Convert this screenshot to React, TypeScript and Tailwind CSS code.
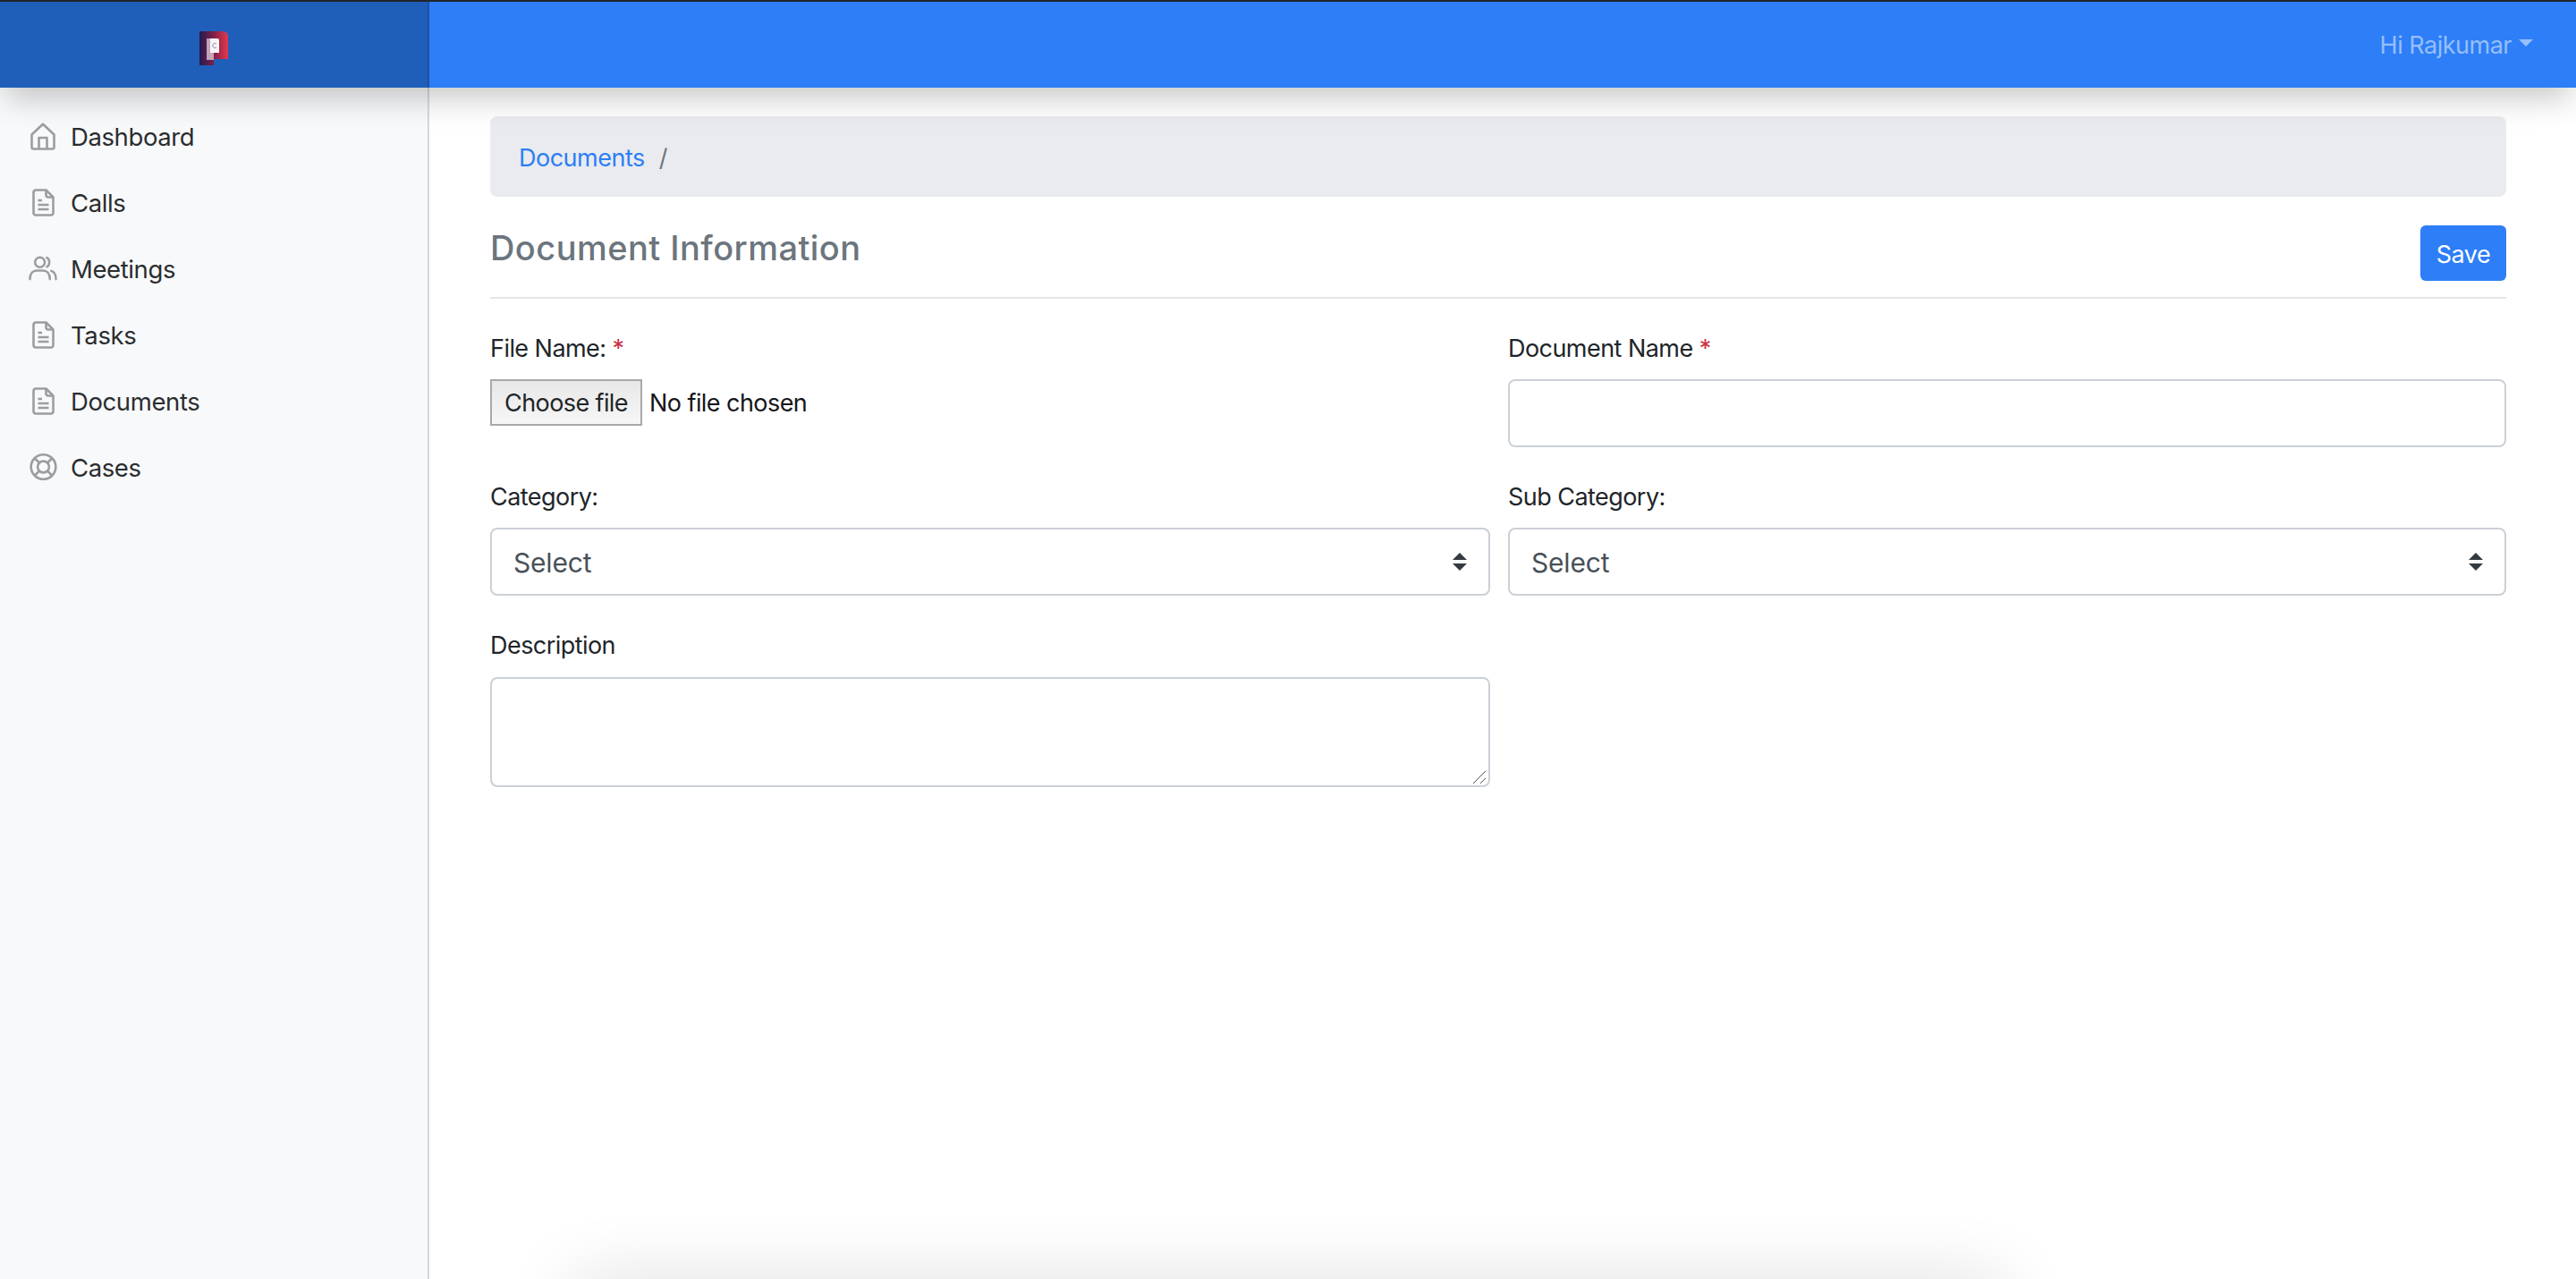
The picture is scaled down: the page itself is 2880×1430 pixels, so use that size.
import React from "react";

function DocIcon() {
  return (
    <svg width="25" height="31" viewBox="0 0 25 31" fill="none" stroke="#9c9d9e" strokeWidth="2.6" strokeLinejoin="round">
      <path d="M1.5 4 a2.5 2.5 0 0 1 2.5-2.5 H15.5 L23.5 9.5 V27 a2.5 2.5 0 0 1-2.5 2.5 H4 a2.5 2.5 0 0 1-2.5-2.5 Z" />
      <path d="M15.5 1.5 V7 a2.5 2.5 0 0 0 2.5 2.5 H23.5" />
      <path d="M6.5 13 H11 M6.5 18 H18.5 M6.5 23 H18.5" />
    </svg>
  );
}

function HomeIcon() {
  return (
    <svg width="28" height="31" viewBox="0 0 28 31" fill="none" stroke="#9c9d9e" strokeWidth="2.6" strokeLinejoin="round">
      <path d="M1.5 13.5 L14 1.8 L26.5 13.5 V27.5 a2 2 0 0 1-2 2 H3.5 a2 2 0 0 1-2-2 Z" />
      <path d="M9.5 29.5 V17 H18.5 V29.5" />
    </svg>
  );
}

function UsersIcon() {
  return (
    <svg width="33" height="28" viewBox="0 0 33 28" fill="none" stroke="#9c9d9e" strokeWidth="2.6" strokeLinecap="round">
      <circle cx="13" cy="7" r="5.6" />
      <path d="M21 1.8 C24.8 3.4 24.8 10.6 21 12.2" />
      <path d="M1.5 26.5 C1.5 20 5 16.5 9.5 16.5 H16.5 C21 16.5 24.5 20 24.5 26.5" />
      <path d="M26 17 C29.5 18 31.5 21 31.5 26.5" />
    </svg>
  );
}

function BuoyIcon() {
  return (
    <svg width="31" height="32" viewBox="0 0 31 32" fill="none" stroke="#9c9d9e" strokeWidth="2.6">
      <circle cx="15.5" cy="16" r="13.8" />
      <circle cx="15.5" cy="16" r="6.4" />
      <path d="M6 6.5 L11 11.5 M25 6.5 L20 11.5 M6 25.5 L11 20.5 M25 25.5 L20 20.5" />
    </svg>
  );
}

function Logo() {
  return (
    <svg width="32" height="38" viewBox="0 0 32 38">
      <defs>
        <linearGradient id="pg" x1="0" y1="0" x2="1" y2="0">
          <stop offset="0" stopColor="#221a4f" />
          <stop offset="0.5" stopColor="#7f2049" />
          <stop offset="1" stopColor="#e6394c" />
        </linearGradient>
      </defs>
      <path d="M1 0 H26 Q32 0 32 6 V31 H16 V38 H1 Q0 38 0 37 V1 Q0 0 1 0 Z" fill="url(#pg)" />
      <path d="M8 8 H12 V24 H16 V32 H8 Z" fill="#ffffff" fillOpacity="0.6" />
      <path d="M12 8 H20 Q22 8 22 10 V24 H12 Z" fill="#ffffff" fillOpacity="0.95" />
      <path d="M19 14 A2.6 2.6 0 1 0 19 18" fill="none" stroke="#8d8fb8" strokeWidth="1" />
    </svg>
  );
}

function SelectArrows() {
  return (
    <svg width="16" height="20" viewBox="0 0 16 20" className="pointer-events-none absolute right-[26px] top-[28px]" fill="#343a40">
      <path d="M8 0 L16 8 H0 Z" />
      <path d="M0 12 H16 L8 20 Z" />
    </svg>
  );
}

const nav: { label: string; icon: React.ReactNode }[] = [
  { label: "Dashboard", icon: <HomeIcon /> },
  { label: "Calls", icon: <DocIcon /> },
  { label: "Meetings", icon: <UsersIcon /> },
  { label: "Tasks", icon: <DocIcon /> },
  { label: "Documents", icon: <DocIcon /> },
  { label: "Cases", icon: <BuoyIcon /> },
];

function Field({ label, star, children }: { label: string; star?: boolean; children: React.ReactNode }) {
  return (
    <div className="flex flex-col">
      <label className="mb-[15px] h-[42px] pt-[2px] text-[27px] leading-[42px] tracking-[-0.55px] text-[#212529]">
        {label}
        {star && <span className="text-[#c9303f]"> *</span>}
      </label>
      {children}
    </div>
  );
}

function SelectBox() {
  return (
    <div className="relative">
      <select className="h-[76px] w-full appearance-none rounded-[8px] border-2 border-[#cbd0d7] bg-white px-[24px] pt-[2px] text-[30px] tracking-[-0.2px] text-[#495057]">
        <option>Select</option>
      </select>
      <SelectArrows />
    </div>
  );
}

export default function App() {
  return (
    <div className="relative flex h-[1430px] w-[2880px] flex-col overflow-hidden bg-white font-['Inter',sans-serif] text-[#212529]">
      <header className="relative z-10 flex h-[98px] shrink-0 border-t-2 border-[#212529] bg-[#2d7ef7] shadow-[0_16px_36px_-6px_rgba(0,0,0,0.24)]">
        <div className="flex w-[480px] shrink-0 items-center justify-center border-r-2 border-[#1c529f] bg-[#205fb9] pt-[8px]">
          <Logo />
        </div>
        <div className="flex flex-1 items-center justify-end pr-[48px]">
          <span className="pt-[2px] text-[27px] leading-[42px] tracking-[-0.5px] text-[#96bffb]">Hi Rajkumar</span>
          <span className="ml-[8px] mb-[4px] h-0 w-0 border-x-[8px] border-t-[8px] border-x-transparent border-t-[#96bffb]" />
        </div>
      </header>

      <div className="flex min-h-0 flex-1">
        <aside className="w-[480px] shrink-0 border-r-2 border-[#d7d8da] bg-[#f8f9fb] pt-[17px]">
          {nav.map((n) => (
            <div key={n.label} className="flex h-[74px] items-center">
              <span className="ml-[32px] flex w-[32px] shrink-0 justify-center">{n.icon}</span>
              <span className="ml-[15px] pt-[1px] text-[27.5px] leading-[42px] tracking-[-0.4px] text-[#2b2d30]">{n.label}</span>
            </div>
          ))}
        </aside>

        <main className="flex-1 pl-[68px] pr-[78px] pt-[32px]">
          <div className="flex h-[90px] items-center rounded-[8px] bg-[#e9ebef] pl-[32px] pt-[4px] text-[27px] tracking-[-0.5px]">
            <span className="text-[#2d7ef7]">Documents</span>
            <span className="ml-[16px] text-[#6c757d]">/</span>
          </div>

          <div className="mt-[32px] flex h-[82px] items-start justify-between border-b-2 border-[#e3e4e6]">
            <h1 className="text-[38px] font-medium leading-[50px] tracking-[0.45px] text-[#6c757d]">Document Information</h1>
            <button className="h-[62px] w-[96px] rounded-[6px] bg-[#2d7ef7] pt-[4px] text-[27px] tracking-[-0.5px] text-white">Save</button>
          </div>

          <div className="mt-[33px] grid grid-cols-[1118px_1116px] gap-x-[20px] gap-y-[33px]">
            <Field label="File Name:" star>
              <div className="flex h-[76px] items-start">
                <button className="h-[52px] w-[170px] border-2 border-[#a9a9a9] bg-gradient-to-b from-[#e8e8e8] to-[#f6f6f6] pt-[2px] text-[27px] tracking-[-0.6px] text-[#212529]">
                  Choose file
                </button>
                <span className="ml-[8px] pt-[1px] text-[27px] leading-[52px] tracking-[-0.56px] text-[#16161a]">No file chosen</span>
              </div>
            </Field>
            <Field label="Document Name" star>
              <input className="h-[76px] w-full rounded-[8px] border-2 border-[#cbd0d7] bg-white px-[24px] text-[30px]" />
            </Field>
            <Field label="Category:">
              <SelectBox />
            </Field>
            <Field label="Sub Category:">
              <SelectBox />
            </Field>
            <Field label="Description">
              <div className="relative mt-[1px] h-[123px]">
                <textarea className="block h-[123px] w-full resize-none rounded-[8px] border-2 border-[#cbd0d7] bg-white px-[24px] py-[12px] text-[30px]" />
                <svg width="16" height="16" viewBox="0 0 16 16" className="pointer-events-none absolute bottom-[3px] right-[4px]" stroke="#555" strokeWidth="1">
                  <path d="M1 15 L15 1 M9 15 L15 9" />
                </svg>
              </div>
            </Field>
          </div>
        </main>
      </div>

      <div className="absolute left-[640px] top-[1432px] h-[60px] w-[1600px] bg-white shadow-[0_0_80px_0_rgba(0,0,0,0.14)]" />
    </div>
  );
}
